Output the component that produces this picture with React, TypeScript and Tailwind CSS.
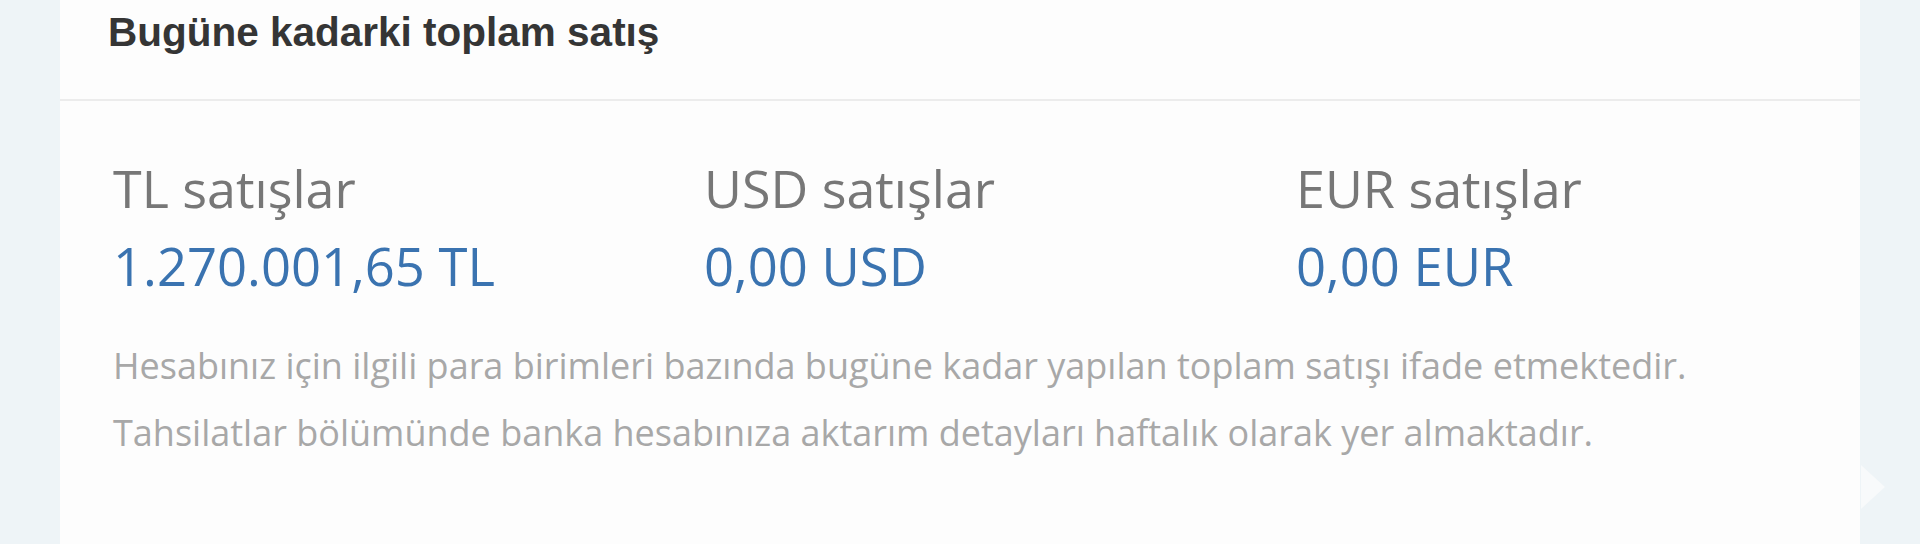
import React from "react";

const cols = [
  { label: "TL satışlar", value: "1.270.001,65 TL" },
  { label: "USD satışlar", value: "0,00 USD" },
  { label: "EUR satışlar", value: "0,00 EUR" },
];

export default function App() {
  return (
    <div className="relative flex h-[544px] w-full overflow-hidden bg-[#eef4f7] px-[60px]">
      <div className="flex flex-1 flex-col bg-[#fdfdfd]">
        <div className="h-[101px] border-b-2 border-[#ececec] pl-[48px] pt-[12px]">
          <h2 className="font-['Liberation_Sans',Arial,sans-serif] text-[40.5px] font-bold leading-[40px] text-[#353535]">
            Bugüne kadarki toplam satış
          </h2>
        </div>
        <div className="pl-[53px] pt-[56px] font-['Open_Sans',sans-serif]">
          <div className="grid grid-cols-[591px_592px_1fr]">
            {cols.map((c) => (
              <div key={c.label} className="flex flex-col">
                <div className="text-[52px] leading-[62px] text-[#777777]">{c.label}</div>
                <div className="mt-[16px] text-[52.6px] leading-[62px] text-[#3a73b0]">{c.value}</div>
              </div>
            ))}
          </div>
          <div className="mt-[35px] text-[36px] leading-[67px] text-[#a8a8a8]">
            <p>Hesabınız için ilgili para birimleri bazında bugüne kadar yapılan toplam satışı ifade etmektedir.</p>
            <p>Tahsilatlar bölümünde banka hesabınıza aktarım detayları haftalık olarak yer almaktadır.</p>
          </div>
        </div>
      </div>
      <div className="absolute right-[35px] top-[465px] h-0 w-0 border-y-[22px] border-l-[24px] border-y-transparent border-l-[#f8fafb]" />
    </div>
  );
}
